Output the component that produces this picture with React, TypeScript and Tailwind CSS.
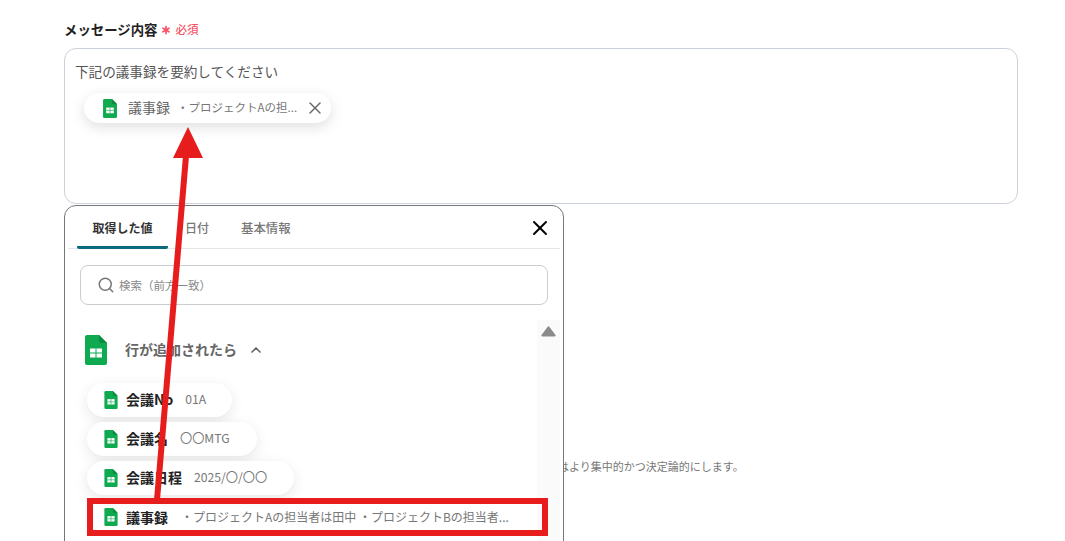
import { X, Search, ChevronUp, Asterisk } from "lucide-react";

const font = { fontFamily: '"Noto Sans CJK JP", "Noto Sans", sans-serif' };

const SheetIcon = ({ className }: { className: string }) => (
  <svg viewBox="0 0 22 30" className={className}>
    <path d="M2 0H14L22 8V28a2 2 0 0 1-2 2H2a2 2 0 0 1-2-2V2a2 2 0 0 1 2-2Z" fill="#0FA950" />
    <path d="M14 0L22 8H16a2 2 0 0 1-2-2Z" fill="#0B8A40" />
    <path d="M5 13.5H17V22.5H5Z" fill="#fff" />
    <path d="M5 18H17M11 13.5V22.5" stroke="#0FA950" strokeWidth="1" />
  </svg>
);

const pills = [
  { title: "会議No", value: "01A", gap: "ml-3", width: "w-[145px]" },
  { title: "会議名", value: "〇〇MTG", gap: "ml-[12px]", width: "w-[170px]" },
  { title: "会議日程", value: "2025/〇/〇〇", gap: "ml-3", width: "w-[207px]" },
];

export default function App() {
  return (
    <div style={font} className="relative h-[541px] w-[1065px] overflow-hidden bg-white">
      {/* form behind the popup */}
      <div className="px-16 pt-[20px]">
        <div className="flex h-[20px] items-center">
          <span className="pb-[2px] text-[13.4px] font-semibold text-[#222]">メッセージ内容</span>
          <Asterisk className="ml-[2px] h-[14px] w-[14px] text-[#f4566a]" strokeWidth={3} />
          <span className="ml-[2px] text-[11.5px] font-medium text-[#f4566a]">必須</span>
        </div>
        <div className="mt-2 h-[156px] w-[954px] rounded-xl border border-[#ccd2da] px-[10px] pt-[12px]">
          <p className="text-[13.6px] leading-[20px] text-[#555]">下記の議事録を要約してください</p>
          <div className="ml-[9px] mt-[12px] flex h-[30px] w-[247px] items-center rounded-full bg-white pl-[19px] shadow-[0_4px_14px_rgba(0,0,0,0.13)]">
            <SheetIcon className="h-[19px] w-[14px]" />
            <span className="ml-[11px] pb-[2px] text-[14px] text-[#666]">議事録</span>
            <span className="ml-[7px] pb-[1px] text-[11.5px] text-[#777]">・プロジェクトAの担...</span>
            <X className="ml-[8px] h-[20px] w-[20px] text-[#666]" strokeWidth={1.75} />
          </div>
        </div>
        <p className="ml-[494px] mt-[254px] text-[11px] leading-[16px] text-[#777]">はより集中的かつ決定論的にします。</p>
      </div>

      {/* value picker */}
      <div className="absolute left-16 top-[205px] h-[400px] w-[500px] rounded-xl border border-[#777] bg-white">
        <div className="mx-[3px] flex h-[43px] items-center border-b border-[#e3e5e8] pl-[9px] pr-[8px]">
          <div className="flex h-[43px] w-[91px] items-center justify-center rounded-[2px] border-b-[3px] border-[#0b6a80] pt-[4px] text-[12px] font-semibold text-[#333]">取得した値</div>
          <span className="ml-[17px] pt-[2px] text-[12px] font-medium text-[#777]">日付</span>
          <span className="ml-[32px] pt-[2px] text-[12.4px] font-medium text-[#777]">基本情報</span>
          <X className="ml-auto mt-[2px] h-[24px] w-[24px] text-black" strokeWidth={2} />
        </div>
        <div className="mx-[15px] mt-[16px] flex h-[40px] w-[468px] items-center rounded-lg border border-[#c9ccd0] pl-[16px]">
          <Search className="h-[18px] w-[18px] text-[#777]" strokeWidth={2} />
          <span className="ml-[4px] pt-[1px] text-[11.5px] text-[#888]">検索（前方一致）</span>
        </div>
        <div className="relative mt-[15px] flex">
          <div className="w-[472px] pl-[22px]">
            <div className="mt-[15px] flex h-[30px] items-center">
              <SheetIcon className="-ml-[2px] h-[30px] w-[22px]" />
              <span className="ml-[18px] pb-[2px] text-[14px] font-semibold text-[#666]">行が追加されたら</span>
              <ChevronUp className="ml-[11px] h-[16px] w-[16px] text-[#666]" strokeWidth={2.5} />
            </div>
            <div className="mt-[18px] flex flex-col gap-[5px]">
              {pills.map((p) => (
                <div key={p.title} className={`flex h-[34px] ${p.width} items-center rounded-full bg-white pl-[17px] shadow-[0_4px_14px_rgba(0,0,0,0.1)]`}>
                  <SheetIcon className="h-[18px] w-[14px]" />
                  <span className="ml-[8px] pb-[2px] text-[14px] font-semibold text-[#222]">{p.title}</span>
                  <span className={`${p.gap} pb-[2px] text-[12.2px] text-[#777]`}>{p.value}</span>
                </div>
              ))}
              <div className="relative -mt-[1px] flex h-[36px] w-[458px] items-center pl-[17px]">
                <SheetIcon className="h-[18px] w-[14px]" />
                <span className="ml-[8px] text-[14px] font-semibold text-[#222]">議事録</span>
                <span className="ml-[13px] text-[12px] text-[#777]">・プロジェクトAの担当者は田中 ・プロジェクトBの担当者...</span>
                <div className="absolute -inset-y-[1px] left-0 w-[461px] border-[6px] border-[#e71c1c]" />
              </div>
            </div>
          </div>
          <div className="h-[300px] w-[23px] bg-[#fafafa] pt-[6px]">
            <svg viewBox="0 0 15 11" className="ml-[4px] h-[11px] w-[15px]">
              <path d="M6.7 0.8a1 1 0 0 1 1.6 0L14.5 9a1 1 0 0 1-1 1.5H1.5a1 1 0 0 1-1-1.5Z" fill="#8a8a8a" />
            </svg>
          </div>
        </div>
      </div>

      {/* callout arrow */}
      <svg className="pointer-events-none absolute left-0 top-0" width="1065" height="541">
        <path d="M157 500L186 156" stroke="#e71c1c" strokeWidth="6" fill="none" />
        <path d="M188 127L173 158L203 158Z" fill="#e71c1c" />
      </svg>
    </div>
  );
}
